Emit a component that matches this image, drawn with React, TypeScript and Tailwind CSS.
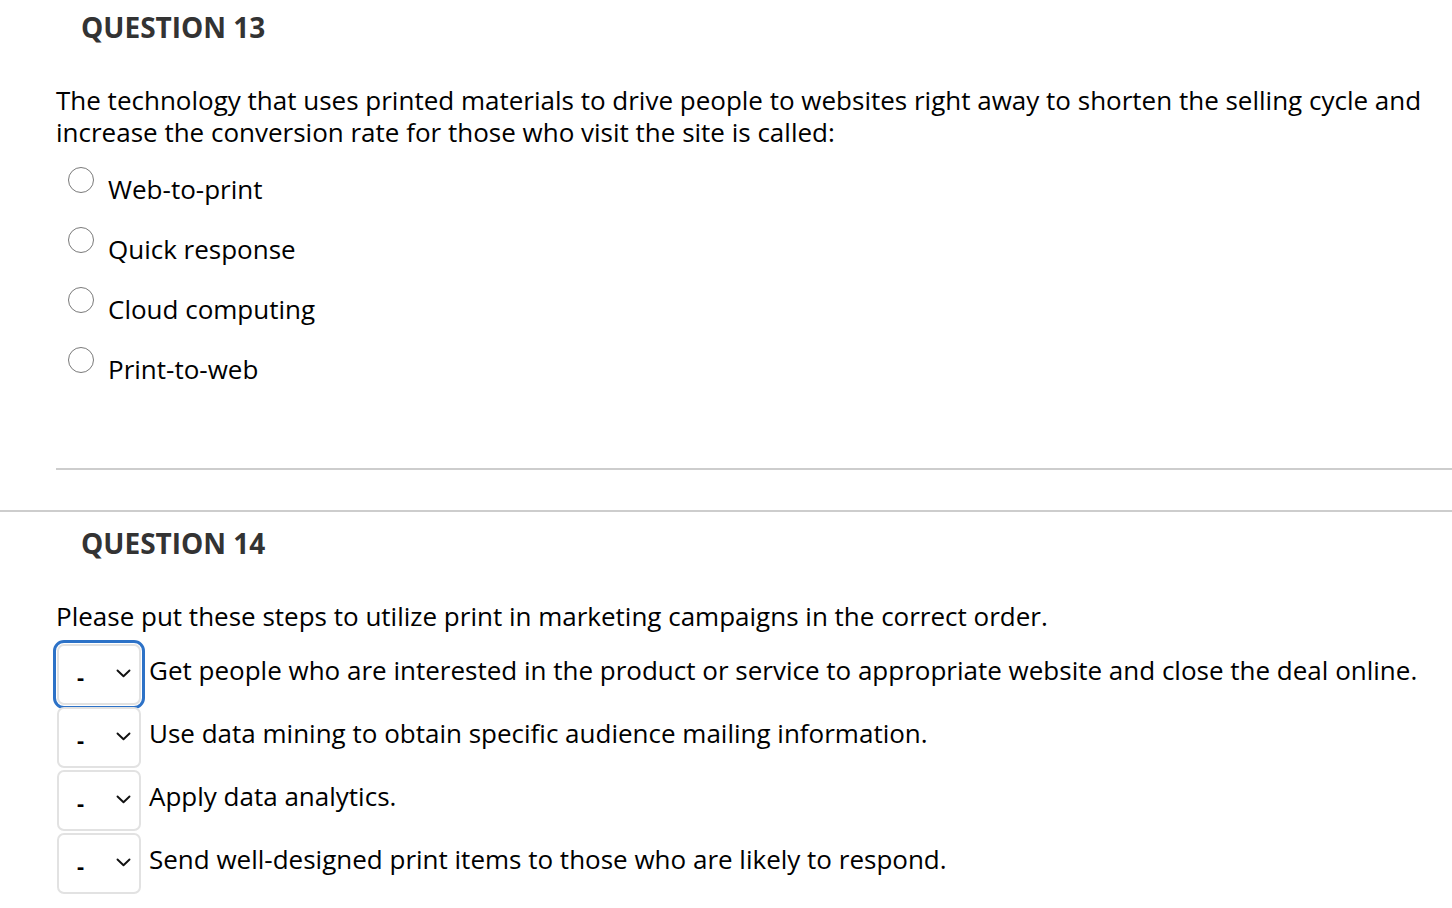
import React from 'react';

const options = ['Web-to-print', 'Quick response', 'Cloud computing', 'Print-to-web'];

const steps = [
  'Get people who are interested in the product or service to appropriate website and close the deal online.',
  'Use data mining to obtain specific audience mailing information.',
  'Apply data analytics.',
  'Send well-designed print items to those who are likely to respond.',
];

function Chevron() {
  return (
    <svg width="15" height="9" viewBox="0 0 15 9" fill="none">
      <path d="M1.5 1.5 L7.5 7.3 L13.5 1.5" stroke="#111" strokeWidth="1.9" strokeLinecap="round" strokeLinejoin="round" />
    </svg>
  );
}

export default function App() {
  return (
    <div className="min-h-[908px] bg-white text-black" style={{ fontFamily: '"Open Sans", "Liberation Sans", sans-serif' }}>
      {/* question 13 */}
      <div className="pl-[56px] pr-[20px]">
        <h2 className="pl-[25px] pt-[9px] text-[28px] leading-[36px] font-bold text-[#333]">QUESTION 13</h2>
        <p className="mt-[39px] text-[26px] leading-[32px]">
          The technology that uses printed materials to drive people to websites right away to shorten the selling cycle and increase the conversion rate for those who visit the site is called:
        </p>
        <div className="mt-[19px] flex flex-col gap-[22px] pl-[12px]">
          {options.map((o) => (
            <label key={o} className="flex items-start">
              <span className="w-[26px] h-[26px] rounded-full border-[1.5px] border-[#7a7a7a] bg-white shrink-0" />
              <span className="ml-[14px] mt-[6px] text-[26px] leading-[32px]">{o}</span>
            </label>
          ))}
        </div>
      </div>

      <div className="ml-[56px] mt-[83px] h-[2px] bg-[#cdcdcd]" />
      <div className="mt-[40px] h-[2px] bg-[#cdcdcd]" />

      {/* question 14 */}
      <div className="pl-[56px] pr-[20px]">
        <h2 className="pl-[25px] pt-[13px] text-[28px] leading-[36px] font-bold text-[#333]">QUESTION 14</h2>
        <p className="mt-[40px] text-[26px] leading-[31px]">
          Please put these steps to utilize print in marketing campaigns in the correct order.
        </p>
        <div className="mt-[12px] flex flex-col gap-[2px]">
          {steps.map((s, i) => (
            <div key={s} className="flex items-center">
              <div
                className={
                  i === 0
                    ? 'ml-[1px] w-[84px] h-[61px] rounded-[7px] border-2 border-[#e2e2e2] bg-white flex items-center justify-between pl-[18px] pr-[8px] outline-[3px] outline-[#2d72c7] outline-offset-[1px]'
                    : 'ml-[1px] w-[84px] h-[61px] rounded-[7px] border-2 border-[#e2e2e2] bg-white flex items-center justify-between pl-[18px] pr-[8px]'
                }
              >
                <span className="mt-[3px] text-[22px] font-bold leading-none">-</span>
                <span className="-mt-[2px]">
                  <Chevron />
                </span>
              </div>
              <span className="ml-[8px] -mt-[9px] text-[26px] leading-[30px] whitespace-nowrap">{s}</span>
            </div>
          ))}
        </div>
      </div>
    </div>
  );
}
